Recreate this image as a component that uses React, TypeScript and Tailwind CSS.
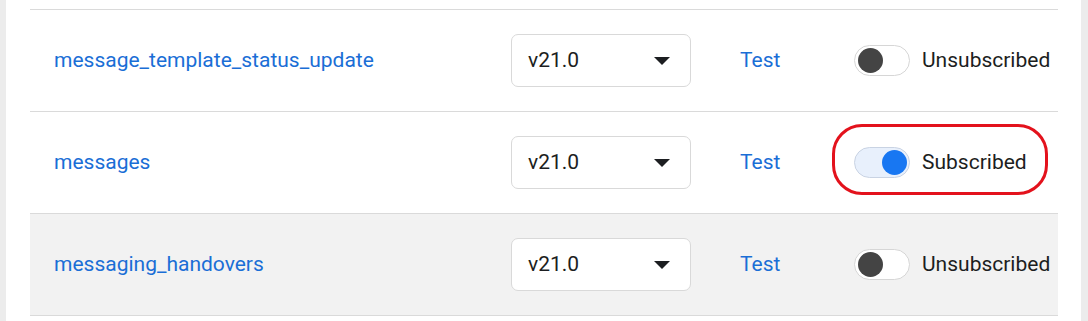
import React from "react";

type WebhookField = {
  name: string;
  version: string;
  subscribed: boolean;
  shaded?: boolean;
  highlighted?: boolean;
};

const FIELDS: WebhookField[] = [
  { name: "message_template_status_update", version: "v21.0", subscribed: false },
  { name: "messages", version: "v21.0", subscribed: true, highlighted: true },
  { name: "messaging_handovers", version: "v21.0", subscribed: false, shaded: true },
];

function Toggle({ on }: { on: boolean }) {
  return (
    <div
      className={
        on
          ? "relative h-[31px] w-[56px] shrink-0 rounded-full border border-[#c9d3e3] bg-[#e8f0fc]"
          : "relative h-[31px] w-[56px] shrink-0 rounded-full border border-[#d6d6d6] bg-white"
      }
    >
      <div
        className={
          on
            ? "absolute right-[2px] top-[2px] h-[25px] w-[25px] rounded-full bg-[#1877f2]"
            : "absolute left-[3px] top-[2px] h-[25px] w-[25px] rounded-full bg-[#444444]"
        }
      />
    </div>
  );
}

function FieldRow({ field }: { field: WebhookField }) {
  return (
    <div
      className={
        field.shaded
          ? "relative flex h-[102px] items-center border-b border-[#dadada] bg-[#f2f2f2]"
          : "relative flex h-[102px] items-center border-b border-[#dadada] bg-white"
      }
    >
      <div className="w-[481px] shrink-0 pl-[24px] text-[21px] text-[#1a6ed6]">
        {field.name}
      </div>
      <div className="flex h-[53px] w-[180px] shrink-0 items-center justify-between rounded-[7px] border border-[#d9d9d9] bg-white pl-[16px] pr-[20px] text-[21px] text-[#1c1e21]">
        <span>{field.version}</span>
        <svg width="16" height="9" viewBox="0 0 16 9" className="mt-[1px]">
          <path d="M0 0h16L8 8z" fill="#1c1e21" />
        </svg>
      </div>
      <div className="w-[163px] shrink-0 pl-[49px] text-[21px] text-[#1a6ed6]">Test</div>
      <div className="flex items-center gap-[12px] text-[21px] text-[#1c1e21]">
        <Toggle on={field.subscribed} />
        <span>{field.subscribed ? "Subscribed" : "Unsubscribed"}</span>
      </div>
      {field.highlighted && (
        <div className="pointer-events-none absolute left-[802px] top-[12px] h-[71px] w-[216px] rounded-[30px] border-[3px] border-[#e3121c]" />
      )}
    </div>
  );
}

export default function App() {
  return (
    <div
      className="flex h-[321px] w-[1088px] overflow-hidden bg-white"
      style={{ fontFamily: "Roboto, 'Liberation Sans', sans-serif" }}
    >
      <div className="w-[6px] shrink-0 bg-[#ececec]" />
      <div className="flex-1 bg-white pl-[24px] pr-[23px]">
        <div className="mt-[9px] border-t border-[#dadada]">
          {FIELDS.map((field) => (
            <FieldRow key={field.name} field={field} />
          ))}
        </div>
      </div>
      <div className="w-[7px] shrink-0 bg-[#ececec]" />
    </div>
  );
}
